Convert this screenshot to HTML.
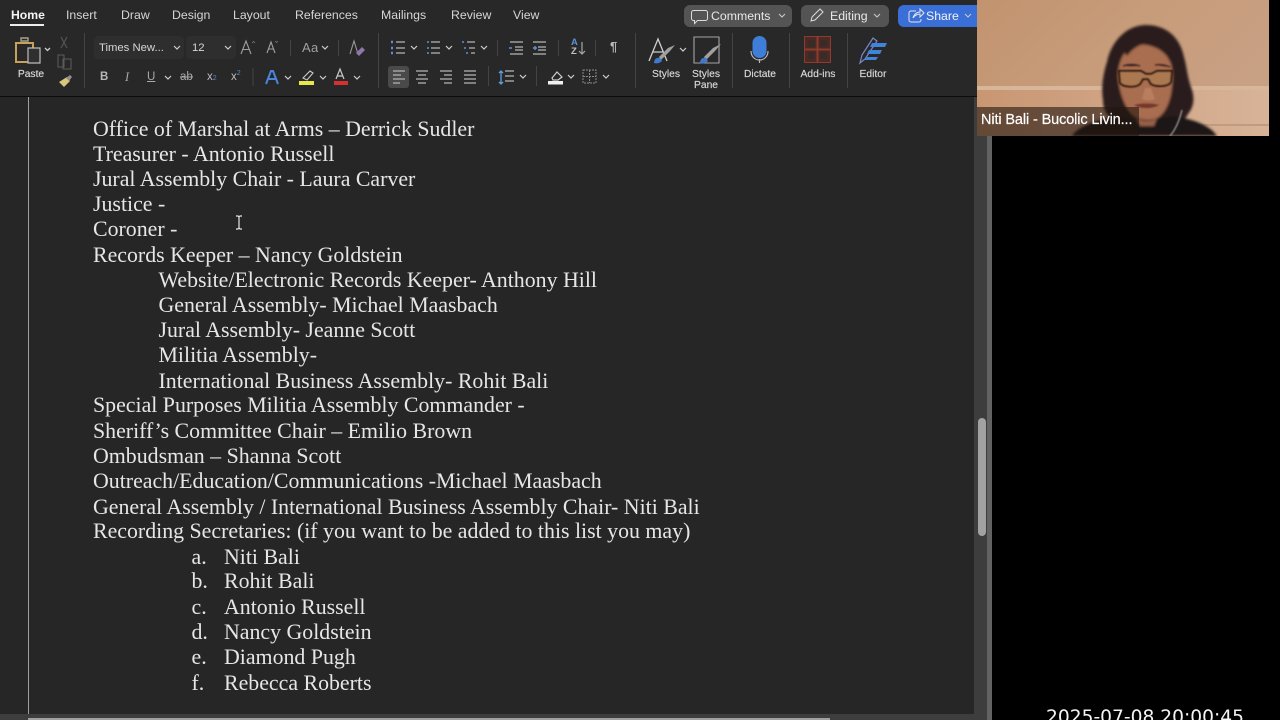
<!DOCTYPE html>
<html lang="en"><head><meta charset="utf-8"><title>Word</title>
<style>
html,body{margin:0;padding:0;background:#000;width:1280px;height:720px;overflow:hidden}
*{box-sizing:border-box}
.a{position:absolute}
#root{position:relative;width:1280px;height:720px;overflow:hidden;background:#000;font-family:"Liberation Sans",sans-serif}
.t{position:absolute;white-space:nowrap;color:#d6d6d6;font-size:12.3px;line-height:14px}
.s{position:absolute;white-space:nowrap;color:#d8d8d8;font-size:10.3px;line-height:12px;text-align:center;transform:translateX(-50%);-webkit-text-stroke:.15px #d8d8d8}
.doc{position:absolute;white-space:nowrap;color:#e6e6e6;font-family:"Liberation Serif",serif;font-size:21.86px;line-height:25px}
svg{position:absolute;left:0;top:0}
</style></head><body><div id="root">
<div class="a" style="left:0;top:0;width:977px;height:96px;background:#282828"></div>
<div class="a" style="left:0;top:96px;width:977px;height:1px;background:#0c0c0c"></div>
<div class="a" style="left:0;top:97px;width:975px;height:617px;background:#262626"></div>
<div class="a" style="left:28px;top:97px;width:1px;height:617px;background:#a0a0a0"></div>
<div class="a" style="left:974px;top:97px;width:13px;height:620px;background:#3d3d3d"></div>
<div class="a" style="left:987px;top:136px;width:5px;height:584px;background:#626262"></div>
<div class="a" style="left:977px;top:136px;width:10px;height:584px;background:#3d3d3d"></div>
<div class="a" style="left:978px;top:418px;width:8px;height:118px;border-radius:4px;background:#a2a2a2"></div>
<div class="a" style="left:0;top:714px;width:987px;height:6px;background:#3d3d3d"></div>
<div class="a" style="left:28px;top:718px;width:802px;height:2px;background:#a0a0a0"></div>

<div class="t" style="left:11px;top:8px;color:#f4f4f4;font-weight:bold;font-size:12.2px">Home</div>
<div class="a" style="left:10px;top:24px;width:34px;height:2px;background:#ececec"></div>
<div class="t" style="left:66px;top:8px">Insert</div>
<div class="t" style="left:121px;top:8px">Draw</div>
<div class="t" style="left:172px;top:8px">Design</div>
<div class="t" style="left:233px;top:8px">Layout</div>
<div class="t" style="left:295px;top:8px">References</div>
<div class="t" style="left:381px;top:8px">Mailings</div>
<div class="t" style="left:451px;top:8px">Review</div>
<div class="t" style="left:513px;top:8px">View</div>

<div class="a" style="left:684px;top:5px;width:108px;height:22px;border-radius:6px;background:#545454"></div>
<div class="a" style="left:801px;top:5px;width:88px;height:22px;border-radius:6px;background:#545454"></div>
<div class="a" style="left:898px;top:5px;width:79px;height:22px;border-radius:6px 0 0 6px;background:#3b6fd8"></div>
<div class="t" style="left:711px;top:9px;color:#e8e8e8">Comments</div>
<div class="t" style="left:830px;top:9px;color:#e8e8e8">Editing</div>
<div class="t" style="left:926px;top:9px;color:#f2f2f2">Share</div>

<div class="a" style="left:94px;top:36px;width:90px;height:23px;border-radius:4px;background:#2e2e2e"></div>
<div class="a" style="left:186px;top:36px;width:50px;height:23px;border-radius:4px;background:#2e2e2e"></div>
<div class="t" style="left:99px;top:41px;font-size:11.3px">Times New...</div>
<div class="t" style="left:192px;top:41px;font-size:11.3px">12</div>
<div class="a" style="left:388px;top:66px;width:21px;height:22px;border-radius:3px;background:#4a4a4a"></div>

<svg width="1280" height="720" viewBox="0 0 1280 720" fill="none">
<!-- separators -->
<g stroke="#444" stroke-width="1">
<path d="M84.500 33V88M290.500 40V56M338.500 40V56M378.500 33V88M253 68V86M497.500 40V56M558.500 40V56M595.500 40V56M488.500 66V86M536.500 66V86M635.500 33V88M732.500 33V88M789.500 33V88M847.500 33V88"/>
</g>
<!-- paste -->
<path d="M16 43H33V62H16Z" stroke="#c9a05a" stroke-width="2"/>
<path d="M21 41h7v-3h-7z" stroke="#a8a08a" stroke-width="1.400"/>
<path d="M28 48H40V63H28Z" fill="#2f2f2f" stroke="#bdbdbd" stroke-width="1.200"/>
<path d="M45 48l2.500 2.500 2.500-2.500" stroke="#cfcfcf" stroke-width="1.300"/>
<path d="M61 37l6 11M67 37l-6 11" stroke="#555" stroke-width="1.200"/>
<path d="M58 55h6v12h-6zM63 59h8v10h-8z" stroke="#5c5c5c"/>
<path d="M59 82l8-5 3 4-6 6z" fill="#d9c67a"/><path d="M66 78l4-3 2 2-3 4z" fill="#8f8f8f"/>
<!-- chevrons -->
<g stroke="#cfcfcf" stroke-width="1.200">
<path d="M174 46l3 3 3-3M225 46l3 3 3-3M322 46l3 3 3-3M165 76l3 3 3-3M285 76l3 3 3-3M320 76l3 3 3-3M354 76l3 3 3-3M411 46l3 3 3-3M446 46l3 3 3-3M481 46l3 3 3-3M520 75l3 3 3-3M568 75l3 3 3-3M603 75l3 3 3-3M680 48l3 3 3-3"/>
</g>
<!-- grow/shrink font -->
<path d="M241 54l5-13 5 13M243 49.500h6" stroke="#a0a0a0" stroke-width="1.100"/>
<path d="M252 43l1.500-1.500 1.500 1.500" stroke="#777" stroke-width=".8"/>
<path d="M267 53l4-11 4 11M268.500 49h5" stroke="#a0a0a0" stroke-width="1.100"/>
<path d="M275 41l1.500 1.500 1.500-1.500" stroke="#777" stroke-width=".8"/>
<path d="M350 54l4-13 4 13" stroke="#9a9a9a" stroke-width="1.100"/><path d="M356 53l6-6 3 3-6 6z" fill="#8e76b0"/>
<!-- lists -->
<g stroke="#b5b5b5" stroke-width="1.200">
<path d="M396 42h9M396 48h9M396 53h9M431 42h9M431 48h9M431 53h9M467 42h8M469 48h6M471 53h4M510 42h13M515 47h8M515 50h8M510 54h13M533 42h13M538 47h8M538 50h8M533 54h13"/>
<path d="M393 71h12M393 75h8M393 79h12M393 83h7M416 71h12M418 75h8M416 79h12M418 83h8M440 71h12M444 75h8M440 79h12M444 83h8M464 71h12M464 75h12M464 79h12M464 83h12M505 71h9M505 76h9M505 81h9"/>
</g>
<path d="M391 42h2M391 48h2M391 53h2" stroke="#5f8fd8" stroke-width="2.500"/>
<path d="M427 42h2M427 48h2M427 53h2M462 42h2M464 48h2M466 53h2" stroke="#5f8fd8" stroke-width="1.400"/>
<path d="M512 48h-3M533 48h4M535 46v4" stroke="#5f8fd8" stroke-width="1.400"/>
<path d="M501 71v13M499 73l2-2 2 2M499 82l2 2 2-2" stroke="#5f9fdc" stroke-width="1.300"/>
<path d="M582 42v12M579 51l3 3 3-3" stroke="#a8a8a8" stroke-width="1.200"/>
<!-- text effects, highlight, colors -->
<path d="M266 84l5-13h2l5 13M268.500 79h7" stroke="#4a86d8" stroke-width="2"/>
<path d="M303 78l7-7 3 2-6 7z" stroke="#c9c9c9" stroke-width="1.100"/><rect x="299" y="81" width="15" height="4" fill="#e6e84a"/>
<path d="M336 79l4-10 4 10M337.500 76h5" stroke="#c9c9c9" stroke-width="1.200"/><rect x="334" y="81" width="14" height="4" fill="#d63030"/>
<path d="M552 78l5-6 5 5-4 3h-5z" stroke="#cfcfcf" stroke-width="1.200"/><rect x="548" y="81" width="15" height="3.500" fill="#f0f0f0"/>
<path d="M583 70h13v13h-13zM589.500 70v13M583 76.500h13" stroke="#8a8a8a" stroke-width="1" stroke-dasharray="2 1"/>
<path d="M180 77h13" stroke="#a8a8a8"/>
<!-- Styles -->
<path d="M649 61l9-22 9 22M653 52h10" stroke="#cfcfcf" stroke-width="1.300"/>
<path d="M661 60l9-9 5-6-7 3-9 9z" fill="#a0a0a0"/><path d="M654 63c0-4 3-6 6-5l2 3c-2 2-5 3-8 2z" fill="#3f78cc"/>
<path d="M694 37h25v26h-25z" stroke="#a3a3a3" stroke-width="1.100"/>
<path d="M706 60l9-9 6-7-8 4-9 9z" fill="#a0a0a0"/><path d="M700 63c0-4 3-6 6-5l2 3c-2 2-5 3-8 2z" fill="#3f78cc"/>
<!-- mic -->
<rect x="752.500" y="36" width="14" height="22" rx="7" fill="#3f7ed8"/>
<path d="M751 51c0 12 17 12 17 0M759.500 59v4" stroke="#b8b8b8" stroke-width="1.200"/>
<!-- add-ins -->
<rect x="804.500" y="36.500" width="26" height="26" fill="#4a2a24" stroke="#8f3a2c"/>
<path d="M817.500 37v25M805 49.500h25" stroke="#8f3a2c" stroke-width="2"/>
<rect x="808" y="40" width="7" height="7" fill="#3a2a28"/><rect x="820" y="40" width="7" height="7" fill="#3a2a28"/><rect x="808" y="52" width="7" height="7" fill="#3a2a28"/><rect x="820" y="52" width="7" height="7" fill="#3a2a28"/>
<!-- editor -->
<path d="M860 63l2-8 11-17 4 3-12 18z" stroke="#7c86c8" stroke-width="1.200"/>
<path d="M872 43h15l-2 4h-15zM869 50h13l-2 4h-13zM866 57h12l-2 3h-12z" fill="#3f84d8"/>
<!-- comment / editing / share icons -->
<path d="M693.500 10.500h12a2 2 0 0 1 2 2v6a2 2 0 0 1-2 2h-8l-3 3v-3h-1a2 2 0 0 1-2-2v-6a2 2 0 0 1 2-2z" stroke="#dcdcdc" stroke-width="1"/>
<path d="M811 21l1-4 8-8 3 3-8 8z" stroke="#dcdcdc" stroke-width="1"/>
<path d="M916 11h-5a2 2 0 0 0-2 2v7a2 2 0 0 0 2 2h8a2 2 0 0 0 2-2v-1" stroke="#e6e6e6" stroke-width="1"/>
<path d="M913 18c1-4 4-6 7-6V9l4 4-4 4v-3c-3 0-5 1-7 4z" stroke="#e6e6e6" stroke-width="1"/>
<path d="M779 14l3 3 3-3M874 14l3 3 3-3M965 14l3 3 3-3" stroke="#c8c8c8" stroke-width="1.100"/>
<!-- I-beam cursor -->
<path d="M236 216h2l1 1 1-1h2M239 217v11M236 229h2l1-1 1 1h2" stroke="#e6e6e6" stroke-width="1.200"/>
</svg>

<div class="t" style="left:100px;top:70px;font-weight:bold;font-size:11.500px;color:#b8b8b8">B</div>
<div class="t" style="left:125px;top:70px;font-style:italic;font-family:'Liberation Serif',serif;color:#a8a8a8">I</div>
<div class="t" style="left:147px;top:70px;text-decoration:underline;font-size:11.500px;color:#a8a8a8">U</div>
<div class="t" style="left:180px;top:70px;font-size:11.500px;color:#a8a8a8">ab</div>
<div class="t" style="left:207px;top:70px;font-size:11.500px;color:#bbb">x<span style="font-size:7px;color:#5f86c8">2</span></div>
<div class="t" style="left:231px;top:70px;font-size:11.500px;color:#bbb">x<sup style="font-size:7px;line-height:0;color:#5f86c8">2</sup></div>
<div class="t" style="left:302px;top:41px;font-size:13px;color:#a0a0a0;letter-spacing:.3px">Aa</div>
<div class="t" style="left:571px;top:38px;font-size:9.500px;line-height:9px;color:#5f8fd8;font-weight:bold">A</div>
<div class="t" style="left:571px;top:47px;font-size:9.500px;line-height:9px;color:#c0c0c0;font-weight:bold">Z</div>
<div class="t" style="left:610px;top:40px;font-size:13px;color:#b8b8b8;font-weight:bold">¶</div>

<div class="s" style="left:31px;top:69px">Paste</div>
<div class="s" style="left:666px;top:69px">Styles</div>
<div class="s" style="left:706px;top:69px">Styles</div>
<div class="s" style="left:706px;top:80px">Pane</div>
<div class="s" style="left:760px;top:69px">Dictate</div>
<div class="s" style="left:818px;top:69px">Add-ins</div>
<div class="s" style="left:873px;top:69px">Editor</div>

<div class="doc" style="left:93px;top:117px">Office of Marshal at Arms – Derrick Sudler</div>
<div class="doc" style="left:93px;top:142px">Treasurer - Antonio Russell</div>
<div class="doc" style="left:93px;top:167px">Jural Assembly Chair - Laura Carver</div>
<div class="doc" style="left:93px;top:192px">Justice -</div>
<div class="doc" style="left:93px;top:217px">Coroner -</div>
<div class="doc" style="left:93px;top:243px">Records Keeper – Nancy Goldstein</div>
<div class="doc" style="left:158.500px;top:268px">Website/Electronic Records Keeper- Anthony Hill</div>
<div class="doc" style="left:158.500px;top:293px">General Assembly- Michael Maasbach</div>
<div class="doc" style="left:158.500px;top:318px">Jural Assembly- Jeanne Scott</div>
<div class="doc" style="left:158.500px;top:343px">Militia Assembly-</div>
<div class="doc" style="left:158.500px;top:369px">International Business Assembly- Rohit Bali</div>
<div class="doc" style="left:93px;top:393px">Special Purposes Militia Assembly Commander -</div>
<div class="doc" style="left:93px;top:419px">Sheriff’s Committee Chair – Emilio Brown</div>
<div class="doc" style="left:93px;top:444px">Ombudsman – Shanna Scott</div>
<div class="doc" style="left:93px;top:469px">Outreach/Education/Communications -Michael Maasbach</div>
<div class="doc" style="left:93px;top:495px">General Assembly / International Business Assembly Chair- Niti Bali</div>
<div class="doc" style="left:93px;top:519px">Recording Secretaries: (if you want to be added to this list you may)</div>
<div class="doc" style="left:191.500px;top:545px">a.</div><div class="doc" style="left:224px;top:545px">Niti Bali</div>
<div class="doc" style="left:191.500px;top:569px">b.</div><div class="doc" style="left:224px;top:569px">Rohit Bali</div>
<div class="doc" style="left:191.500px;top:595px">c.</div><div class="doc" style="left:224px;top:595px">Antonio Russell</div>
<div class="doc" style="left:191.500px;top:620px">d.</div><div class="doc" style="left:224px;top:620px">Nancy Goldstein</div>
<div class="doc" style="left:191.500px;top:645px">e.</div><div class="doc" style="left:224px;top:645px">Diamond Pugh</div>
<div class="doc" style="left:191.500px;top:671px">f.</div><div class="doc" style="left:224px;top:671px">Rebecca Roberts</div>

<!-- webcam -->
<svg style="left:977px;top:0" width="292" height="136" viewBox="0 0 292 136">
<defs>
<linearGradient id="wall" x1="0" y1="0" x2="1" y2="0.500"><stop offset="0" stop-color="#c2936f"/><stop offset="0.500" stop-color="#c79c7a"/><stop offset="1" stop-color="#c8a084"/></linearGradient>
<linearGradient id="wain" x1="0" y1="0" x2="1" y2="0"><stop offset="0" stop-color="#c99672"/><stop offset="1" stop-color="#d8b398"/></linearGradient>
<filter id="b" x="-20%" y="-20%" width="140%" height="140%"><feGaussianBlur stdDeviation="1.300"/></filter>
<filter id="b2" x="-20%" y="-20%" width="140%" height="140%"><feGaussianBlur stdDeviation="0.700"/></filter>
</defs>
<rect width="292" height="136" fill="url(#wall)"/>
<rect y="87" width="292" height="49" fill="url(#wain)"/>
<rect y="86" width="292" height="4" fill="#d8b69a"/>
<rect y="124" x="210" width="82" height="2" fill="#bf9b80"/>
<g filter="url(#b)">
<!-- hair mass -->
<path d="M126 100c-2-12 0-26 4-38 4-20 19-37 39-37 20 0 34 12 38 32 3 10 3 20 8 33 3 10 1 18-4 24l-6 10h-69l-6-10c-3-4-4-9-4-14z" fill="#2c1e1a"/>
<!-- face -->
<path d="M141 76c0-14 6-28 18-31 12-2 26 3 33 14 4 8 4 18 3 27-1 14-6 26-13 31-7 4-18 4-25-1-9-7-15-24-16-40z" fill="#a96d50"/>
<!-- hair part over forehead -->
<path d="M150 56c6-8 14-13 22-12 9 2 17 8 21 18l-1-16-14-11-22 1-12 12z" fill="#2b1d1a"/>
<!-- body -->
<path d="M95 136c6-10 26-16 45-20l10 2c8 6 26 6 34 0l12-2c18 3 36 8 44 20z" fill="#1a1614"/>
<path d="M159 118c7 4 15 4 21 0l-3 8h-14z" fill="#99604a"/>
</g>
<g filter="url(#b2)">
<!-- glasses -->
<path d="M142 71h22l5 3h5l6-3h15l-1 11c-3 5-15 5-20 2l-3-5h-5l-3 5c-5 4-17 3-20-1z" fill="#ab7850" stroke="#2a1710" stroke-width="2"/>
<path d="M146 66c5-2 12-2 17 0M178 65c5-1 11 0 15 2" stroke="#4a2c20" stroke-width="1.500"/>
<path d="M168 88l-3 11c4 2 9 2 13 0l-4-11z" fill="#bd8566" opacity=".7"/>
<path d="M157 105c7-2 18-2 25 0-7 4-18 4-25 0z" fill="#74392c"/>
<path d="M205 110c-2 8-5 18-12 26" stroke="#b5b5b5" stroke-width="1.100" fill="none"/>
</g>
<rect x="0" y="107" width="162" height="29" fill="#22150f" opacity=".6"/>
</svg>
<div class="a" style="left:981px;top:110px;color:#fff;font-size:14.500px;line-height:20px;white-space:nowrap;-webkit-text-stroke:.2px #fff;letter-spacing:-.12px">Niti Bali - Bucolic Livin...</div>

<div class="a" style="left:1046px;top:707px;color:#f4f4f4;font-family:'DejaVu Sans',sans-serif;font-size:18.650px;line-height:22px;white-space:nowrap">2025-07-08 20:00:45</div>
</div></body></html>
